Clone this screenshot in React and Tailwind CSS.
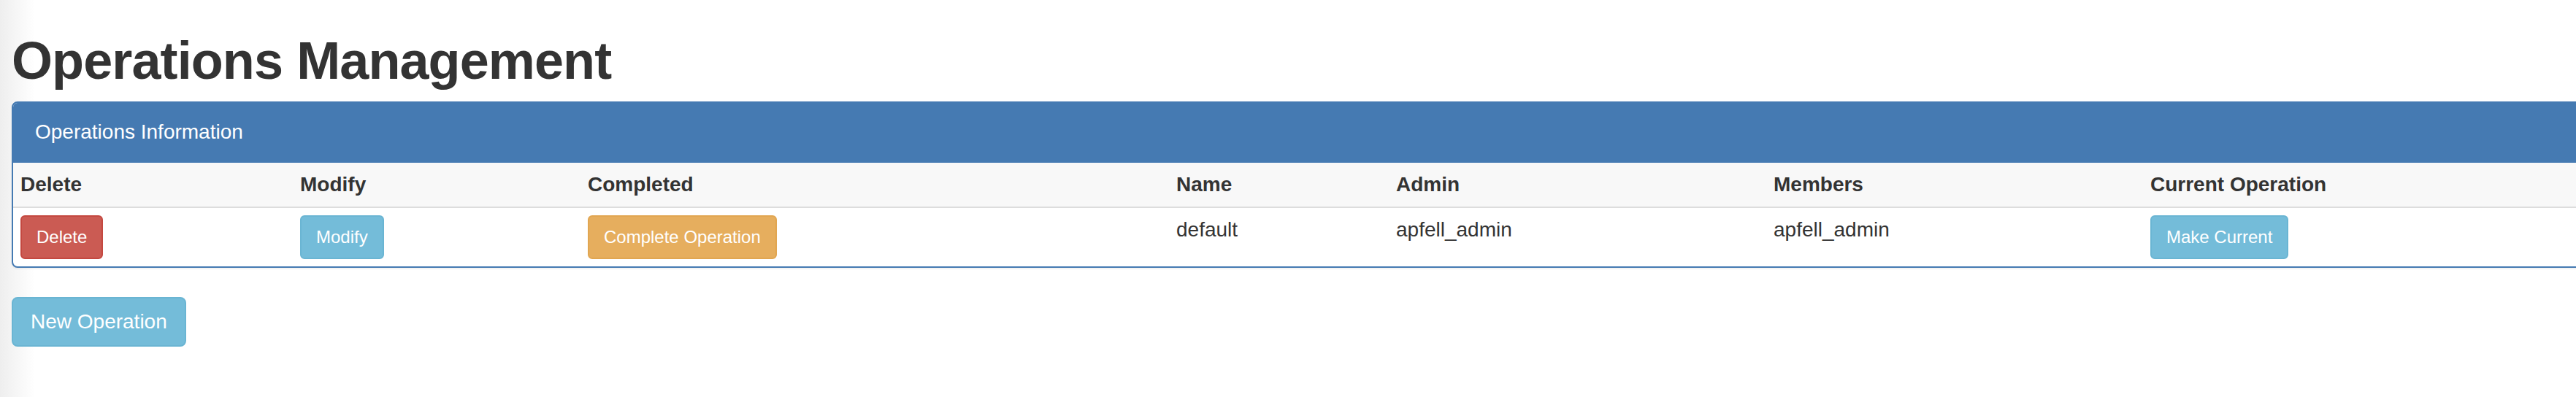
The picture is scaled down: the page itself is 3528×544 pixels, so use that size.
import React from "react";

const operations = [
  { id: 1, name: "default", admin: "apfell_admin", members: "apfell_admin" },
];

const columns = [
  { label: "Delete", width: "w-[383px]" },
  { label: "Modify", width: "w-[394px]" },
  { label: "Completed", width: "w-[806px]" },
  { label: "Name", width: "w-[301px]" },
  { label: "Admin", width: "w-[517px]" },
  { label: "Members", width: "w-[516px]" },
  { label: "Current Operation", width: "" },
];

const btnSm =
  "text-white text-[24px] leading-[36px] px-[20px] py-[10px] border-2 rounded-[6px]";

const App = () => {
  return (
    <div className="min-h-[544px] w-full overflow-hidden bg-[linear-gradient(to_right,#eeeeee,#ffffff_48px)] font-['Liberation_Sans',Arial,sans-serif] text-[#333]">
      <div className="pl-[16px]">
        <h1 className="mt-[44px] mb-[16px] text-[72px] leading-[79px] font-bold tracking-[-0.9px] text-[#333]">
          Operations Management
        </h1>

        {/* panel */}
        <div className="w-[3600px] border-2 border-[#457ab2] rounded-[8px] bg-white shadow-[0_2px_2px_rgba(0,0,0,0.05)] overflow-hidden mb-[40px]">
          <div className="bg-[#457ab2] text-white text-[28px] leading-[40px] px-[30px] pt-[20px] pb-[22px]">
            Operations Information
          </div>
          <table className="w-full table-fixed border-collapse text-[28px] leading-[40px]">
            <thead>
              <tr className="bg-[#f8f8f8] border-b-2 border-[#dddddd]">
                {columns.map((col) => (
                  <th
                    key={col.label}
                    className={`${col.width} px-[10px] py-[10px] text-left font-bold align-bottom`}
                  >
                    {col.label}
                  </th>
                ))}
              </tr>
            </thead>
            <tbody>
              {operations.map((op) => (
                <tr key={op.id}>
                  <td className="px-[10px] py-[10px] align-top">
                    <button className={`${btnSm} bg-[#cb5b53] border-[#c44840]`}>
                      Delete
                    </button>
                  </td>
                  <td className="px-[10px] py-[10px] align-top">
                    <button className={`${btnSm} bg-[#74bcd9] border-[#6ab5d3]`}>
                      Modify
                    </button>
                  </td>
                  <td className="px-[10px] py-[10px] align-top">
                    <button className={`${btnSm} bg-[#e6ae5e] border-[#e1a651]`}>
                      Complete Operation
                    </button>
                  </td>
                  <td className="px-[10px] py-[10px] align-top">{op.name}</td>
                  <td className="px-[10px] py-[10px] align-top">{op.admin}</td>
                  <td className="px-[10px] py-[10px] align-top">{op.members}</td>
                  <td className="px-[10px] py-[10px] align-top">
                    <button className={`${btnSm} bg-[#74bcd9] border-[#6ab5d3]`}>
                      Make Current
                    </button>
                  </td>
                </tr>
              ))}
            </tbody>
          </table>
        </div>

        <button className="text-white text-[28px] leading-[40px] px-[24px] py-[12px] border-2 rounded-[8px] bg-[#74bcd9] border-[#6ab5d3]">
          New Operation
        </button>
      </div>
    </div>
  );
};

export default App;
